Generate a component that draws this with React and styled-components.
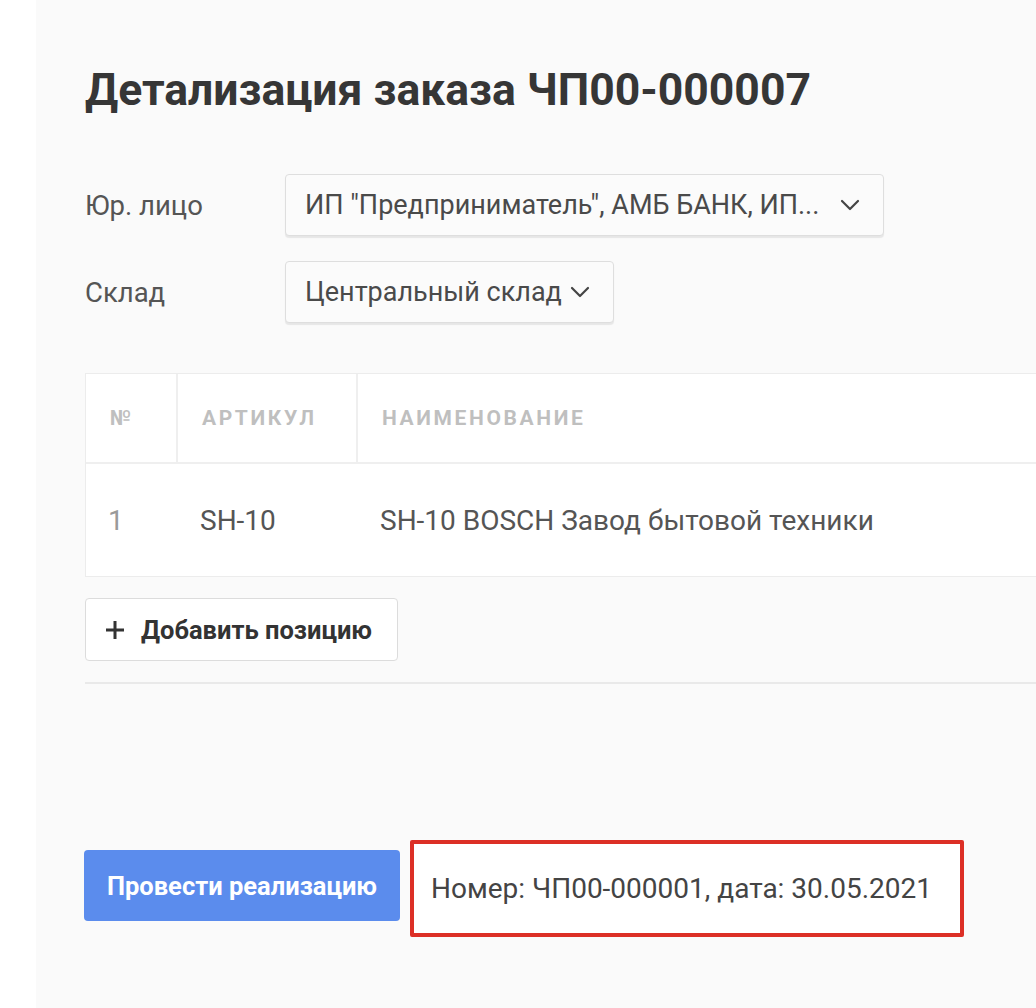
import React from "react";
import styled, { createGlobalStyle } from "styled-components";

const Global = createGlobalStyle`
  html, body { margin: 0; padding: 0; background: #ffffff; }
  body { font-family: Roboto, "Noto Sans", sans-serif; }
  * { box-sizing: border-box; }
`;

const Shell = styled.div`
  display: flex;
  min-height: 1008px;
  width: 1036px;
  overflow: hidden;
`;

const Gutter = styled.div`
  width: 36px;
  flex: none;
  background: #ffffff;
`;

const Main = styled.main`
  flex: 1;
  background: #fafafa;
  padding: 62px 0 0 49px;
  display: flex;
  flex-direction: column;
`;

const Title = styled.h1`
  margin: 0 0 56px 0;
  font-size: 44.5px;
  line-height: 56px;
  font-weight: 700;
  color: #363636;
  white-space: nowrap;
`;

const FieldRow = styled.div`
  display: flex;
  align-items: center;
  margin-bottom: ${(p) => p.$mb || 0}px;
`;

const Label = styled.div`
  width: 200px;
  font-size: 27.5px;
  color: #555;
`;

const Select = styled.div`
  height: 62px;
  width: ${(p) => p.$w}px;
  display: flex;
  align-items: center;
  justify-content: space-between;
  padding: 0 22px 0 19px;
  background: #fbfbfb;
  border: 1px solid #dedede;
  border-radius: 4px;
  box-shadow: 0 2px 1px rgba(0, 0, 0, 0.08);
  font-size: 27px;
  color: #4a4a4a;
  white-space: nowrap;
`;

const Chevron = () => (
  <svg width="22" height="14" viewBox="0 0 22 14" fill="none">
    <path d="M3 3 L11 11 L19 3" stroke="#444" strokeWidth="2.2" strokeLinecap="round" strokeLinejoin="round" />
  </svg>
);

const Table = styled.div`
  margin-top: 50px;
  margin-right: -20px;
  background: #ffffff;
  border: 1.5px solid #ececec;
  border-right: none;
`;

const Row = styled.div`
  display: grid;
  grid-template-columns: 90px 180px 1fr;
  height: ${(p) => p.$h}px;
  border-top: ${(p) => (p.$first ? "none" : "2px solid #efefef")};
`;

const HeadCell = styled.div`
  display: flex;
  align-items: center;
  padding-left: ${(p) => p.$pl || 24}px;
  border-left: ${(p) => (p.$first ? "none" : "2px solid #efefef")};
  font-size: 21px;
  font-weight: 700;
  letter-spacing: 2.6px;
  color: #bfbfbf;
  text-transform: uppercase;
`;

const Cell = styled.div`
  display: flex;
  align-items: center;
  padding-left: ${(p) => p.$pl || 24}px;
  font-size: 28px;
  color: ${(p) => (p.$muted ? "#9a9a9a" : "#555")};
  white-space: nowrap;
`;

const AddButton = styled.button`
  margin-top: 21px;
  align-self: flex-start;
  height: 63px;
  width: 313px;
  display: flex;
  align-items: center;
  gap: 16px;
  padding: 0 0 0 19px;
  background: #ffffff;
  border: 1px solid #dcdcdc;
  border-radius: 4px;
  font-family: inherit;
  font-size: 25.5px;
  font-weight: 700;
  color: #333;
  white-space: nowrap;
`;

const Divider = styled.div`
  margin-top: 21px;
  height: 2px;
  background: #e9e9e9;
  margin-right: -20px;
`;

const Footer = styled.div`
  margin-top: 156px;
  display: flex;
  align-items: flex-start;
  gap: 10px;
  margin-left: -1px;
`;

const PrimaryButton = styled.button`
  margin-top: 10px;
  height: 71px;
  width: 316px;
  padding: 0;
  background: #5b8ced;
  border: none;
  border-radius: 4px;
  font-family: inherit;
  font-size: 25.5px;
  font-weight: 700;
  color: #ffffff;
  white-space: nowrap;
`;

const Highlight = styled.div`
  height: 97px;
  width: 554px;
  border: 4px solid #dc2f26;
  border-radius: 2px;
  background: #ffffff;
  display: flex;
  align-items: center;
  padding-left: 17px;
  font-size: 28px;
  color: #444;
  white-space: nowrap;
`;

const Plus = () => (
  <svg width="20" height="20" viewBox="0 0 20 20">
    <path d="M10 1 V19 M1 10 H19" stroke="#333" strokeWidth="3" />
  </svg>
);

export default function App() {
  return (
    <>
      <Global />
      <Shell>
        <Gutter />
        <Main>
          <Title>Детализация заказа ЧП00-000007</Title>
          <FieldRow $mb={25}>
            <Label>Юр. лицо</Label>
            <Select $w={599}>
              <span>ИП "Предприниматель", АМБ БАНК, ИП...</span>
              <Chevron />
            </Select>
          </FieldRow>
          <FieldRow>
            <Label>Склад</Label>
            <Select $w={329}>
              <span>Центральный склад</span>
              <Chevron />
            </Select>
          </FieldRow>
          <Table>
            <Row $h={88} $first>
              <HeadCell $first $pl={24}>№</HeadCell>
              <HeadCell>Артикул</HeadCell>
              <HeadCell>Наименование</HeadCell>
            </Row>
            <Row $h={114}>
              <Cell $muted $pl={22}>1</Cell>
              <Cell>SH-10</Cell>
              <Cell>SH-10 BOSCH Завод бытовой техники</Cell>
            </Row>
          </Table>
          <AddButton>
            <Plus />
            Добавить позицию
          </AddButton>
          <Divider />
          <Footer>
            <PrimaryButton>Провести реализацию</PrimaryButton>
            <Highlight>Номер: ЧП00-000001, дата: 30.05.2021</Highlight>
          </Footer>
        </Main>
      </Shell>
    </>
  );
}
